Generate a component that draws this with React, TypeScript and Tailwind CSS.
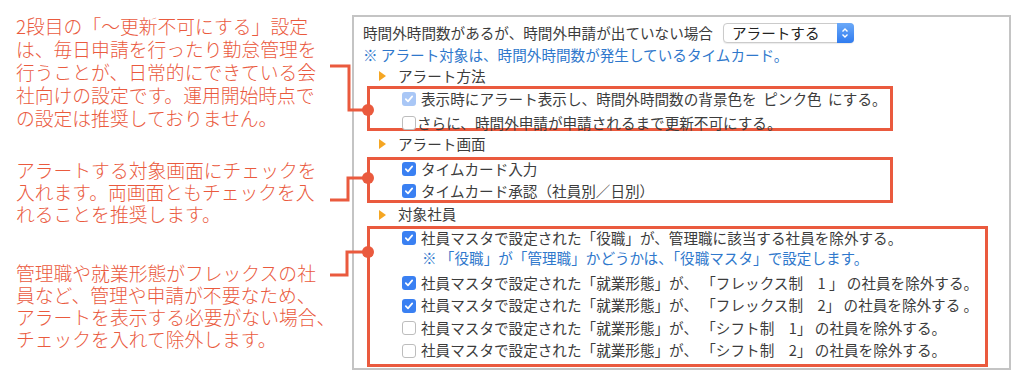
import React from "react";

const RED = "#ea5a3e";

function Check({ state }: { state: "on" | "off" | "dim" }) {
  if (state === "off") {
    return <span className="w-[14px] h-[14px] shrink-0 rounded-[3px] border border-[#bdbdbd] bg-white" />;
  }
  return (
    <span
      className={`w-[14px] h-[14px] shrink-0 rounded-[3px] flex items-center justify-center ${
        state === "on" ? "bg-[#3a80f2]" : "bg-[#a9c7f6]"
      }`}
    >
      <svg width="10" height="10" viewBox="0 0 10 10">
        <polyline points="1.8,5.2 4,7.4 8.2,2.4" fill="none" stroke="white" strokeWidth="1.7" strokeLinecap="round" strokeLinejoin="round" />
      </svg>
    </span>
  );
}

function Section({ label, h }: { label: string; h: string }) {
  return (
    <div className={`${h} flex items-center pl-[25px]`}>
      <svg width="8" height="10" viewBox="0 0 8 10" className="shrink-0">
        <polygon points="0,0 7,5 0,10" fill="#f5a623" />
      </svg>
      <span className="ml-[11px]">{label}</span>
    </div>
  );
}

function Row({ h, state, text, gap = "ml-[5px]" }: { h: string; state: "on" | "off" | "dim"; text: string; gap?: string }) {
  return (
    <div className={`${h} flex items-center pl-[32px]`}>
      <Check state={state} />
      <span className={`${gap} whitespace-pre`}>{text}</span>
    </div>
  );
}

export default function App() {
  return (
    <div className="relative w-[1013px] h-[372px] bg-white flex font-['Noto_Sans_CJK_JP',sans-serif] overflow-hidden">
      {/* annotations */}
      <div className="w-[352px] shrink-0 pl-[16px] text-[18.8px] font-light text-[#ea5a3e]">
        <div className="mt-[14px] leading-[23px]">
          <div>2段目の「～更新不可にする」設定</div>
          <div>は、毎日申請を行ったり勤怠管理を</div>
          <div>行うことが、日常的にできている会</div>
          <div>社向けの設定です。運用開始時点で</div>
          <div>の設定は推奨しておりません。</div>
        </div>
        <div className="mt-[30px] leading-[22px]">
          <div>アラートする対象画面にチェックを</div>
          <div>入れます。両画面ともチェックを入</div>
          <div>れることを推奨します。</div>
        </div>
        <div className="mt-[37px] leading-[22px]">
          <div>管理職や就業形態がフレックスの社</div>
          <div>員など、管理や申請が不要なため、</div>
          <div>アラートを表示する必要がない場合、</div>
          <div>チェックを入れて除外します。</div>
        </div>
      </div>

      {/* settings panel */}
      <div className="mt-[15px] w-[659px] h-[355px] border-2 border-[#c4c4c4] text-[14.6px] leading-none text-[#3c3c3c]">
        <div className="mt-[5px] h-[22px] flex items-center pl-[9px]">
          <span>時間外時間数があるが、時間外申請が出ていない場合</span>
          <div className="ml-[10px] w-[131px] h-[20px] flex rounded-[4px] border border-[#cbcbcb] bg-white shadow-[0_1px_1px_rgba(0,0,0,0.08)]">
            <span className="flex-1 flex items-center pl-[8px] text-[#222]">アラートする</span>
            <span className="w-[17px] -my-px -mr-px rounded-r-[4px] bg-linear-to-b from-[#6ba9f8] to-[#2f7bef] flex items-center justify-center">
              <svg width="8" height="12" viewBox="0 0 8 12">
                <polyline points="1.5,4.5 4,2 6.5,4.5" fill="none" stroke="white" strokeWidth="1.4" />
                <polyline points="1.5,7.5 4,10 6.5,7.5" fill="none" stroke="white" strokeWidth="1.4" />
              </svg>
            </span>
          </div>
        </div>
        <div className="h-[22px] flex items-center pl-[9px] text-[#2f78cc] whitespace-pre">※ アラート対象は、時間外時間数が発生しているタイムカード。</div>

        <Section label="アラート方法" h="h-[20px]" />
        <div className="ml-[13px] w-[526px] h-[45px] border-[3px] border-[#ea5a3e]">
          <Row h="h-[20px]" state="dim" text="表示時にアラート表示し、時間外時間数の背景色を  ピンク色  にする。" />
          <div className="mt-[3px]">
            <Row h="h-[22px]" state="off" gap="ml-[1px]" text="さらに、時間外申請が申請されるまで更新不可にする。" />
          </div>
        </div>

        <Section label="アラート画面" h="h-[26px]" />
        <div className="ml-[13px] w-[526px] h-[46px] border-[3px] border-[#ea5a3e]">
          <Row h="h-[18px]" state="on" text="タイムカード入力" />
          <div className="mt-[3px]">
            <Row h="h-[20px]" state="on" text="タイムカード承認（社員別／日別）" />
          </div>
        </div>

        <Section label="対象社員" h="h-[23px]" />
        <div className="ml-[13px] w-[621px] h-[141px] border-[3px] border-[#ea5a3e]">
          <Row h="h-[18px]" state="on" text="社員マスタで設定された「役職」が、管理職に該当する社員を除外する。" />
          <div className="h-[22px] flex items-center pl-[52px] text-[#2f78cc] whitespace-pre">※ 「役職」が「管理職」かどうかは、「役職マスタ」で設定します。</div>
          <div className="mt-[3px]">
            <Row h="h-[22px]" state="on" text="社員マスタで設定された「就業形態」が、 「フレックス制　1 」 の社員を除外する。" />
            <Row h="h-[23px]" state="on" text="社員マスタで設定された「就業形態」が、 「フレックス制　2」 の社員を除外する 。" />
            <Row h="h-[22px]" state="off" text="社員マスタで設定された「就業形態」が、 「シフト制　1」 の社員を除外する。" />
            <Row h="h-[23px]" state="off" text="社員マスタで設定された「就業形態」が、 「シフト制　2」 の社員を除外する。" />
          </div>
        </div>
      </div>

      {/* callout connectors */}
      <svg className="absolute inset-0 pointer-events-none" width="1013" height="372">
        <g fill="none" stroke={RED} strokeWidth="3">
          <path d="M330 66 H349 V110 H368" />
          <path d="M330 200 H348 V178 H368" />
          <path d="M330 275 H347 V252 H368" />
        </g>
        <g fill={RED}>
          <circle cx="368" cy="110" r="6" />
          <circle cx="368" cy="178" r="6" />
          <circle cx="368" cy="252" r="6" />
        </g>
      </svg>
    </div>
  );
}
